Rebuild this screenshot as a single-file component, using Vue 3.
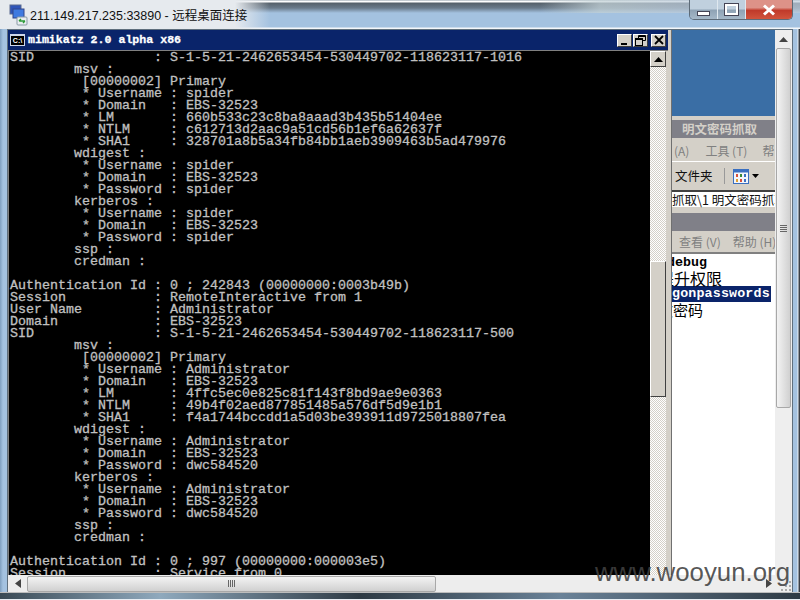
<script setup>
const lines = [
'SID               : S-1-5-21-2462653454-530449702-118623117-1016',
'        msv :',
'         [00000002] Primary',
'         * Username : spider',
'         * Domain   : EBS-32523',
'         * LM       : 660b533c23c8ba8aaad3b435b51404ee',
'         * NTLM     : c612713d2aac9a51cd56b1ef6a62637f',
'         * SHA1     : 328701a8b5a34fb84bb1aeb3909463b5ad479976',
'        wdigest :',
'         * Username : spider',
'         * Domain   : EBS-32523',
'         * Password : spider',
'        kerberos :',
'         * Username : spider',
'         * Domain   : EBS-32523',
'         * Password : spider',
'        ssp :',
'        credman :',
'',
'Authentication Id : 0 ; 242843 (00000000:0003b49b)',
'Session           : RemoteInteractive from 1',
'User Name         : Administrator',
'Domain            : EBS-32523',
'SID               : S-1-5-21-2462653454-530449702-118623117-500',
'        msv :',
'         [00000002] Primary',
'         * Username : Administrator',
'         * Domain   : EBS-32523',
'         * LM       : 4ffc5ec0e825c81f143f8bd9ae9e0363',
'         * NTLM     : 49b4f02aed877851485a576df5d9e1b1',
'         * SHA1     : f4a1744bccdd1a5d03be393911d9725018807fea',
'        wdigest :',
'         * Username : Administrator',
'         * Domain   : EBS-32523',
'         * Password : dwc584520',
'        kerberos :',
'         * Username : Administrator',
'         * Domain   : EBS-32523',
'         * Password : dwc584520',
'        ssp :',
'        credman :',
'',
'Authentication Id : 0 ; 997 (00000000:000003e5)',
'Session           : Service from 0',
]
</script>

<template>
  <div class="screen">
    <header class="titlebar">
      <svg class="rdp" width="22" height="22" viewBox="0 0 22 22">
        <rect x="2" y="1" width="11" height="9" fill="#2f55b8" stroke="#5a6a90"/>
        <rect x="5" y="5" width="11" height="9" fill="#3f7ae0" stroke="#33468a"/>
        <rect x="9" y="13" width="10" height="8" rx="1" fill="#e8eef0" stroke="#8a99a5"/>
        <path d="M11 17h6M11 17l2-2M17 17l-2 2" stroke="#2d9a36" stroke-width="1.4" fill="none"/>
      </svg>
      <span class="title">211.149.217.235:33890 - 远程桌面连接</span>
      <div class="caption">
        <span class="cap"><i class="min"></i></span>
        <span class="cap"><i class="max"></i></span>
        <span class="cap close">
          <svg width="14" height="12" viewBox="0 0 14 12"><path d="M2 1.500l10 9M12 1.500l-10 9" stroke="#fff" stroke-width="3"/></svg>
        </span>
      </div>
    </header>

    <div class="frame">
      <div class="remote">
        <section class="console">
          <div class="conbar">
            <span class="conicon">C:\</span>
            <span class="contitle">mimikatz 2.0 alpha x86</span>
            <span class="conbtns">
              <b class="cb"><svg width="10" height="10" viewBox="0 0 10 10"><path d="M1 8h6v2H1z"/></svg></b>
              <b class="cb"><svg width="11" height="11" viewBox="0 0 11 11" fill="none" stroke="#000"><path d="M3.500 3V.5h7v5H8"/><path d="M3.500 1.500h7"/><rect x=".5" y="3.500" width="7" height="7"/><path d="M.5 4.500h7"/></svg></b>
              <b class="cb gap"><svg width="10" height="10" viewBox="0 0 10 10"><path d="M1 1l8 8M9 1l-8 8" stroke="#000" stroke-width="1.800"/></svg></b>
            </span>
          </div>
          <div class="conbody">
            <pre class="output"><template v-for="(l, i) in lines" :key="i">{{ l }}
</template></pre>
            <div class="conscroll">
              <b class="sbtn"><svg width="9" height="5" viewBox="0 0 9 5"><path d="M4.500 0L9 5H0z"/></svg></b>
              <div class="track"><div class="thumb"></div></div>
            </div>
          </div>
        </section>

        <aside class="side">
          <div class="sidecol">
            <div class="blue"></div>
            <div class="captionbar">明文密码抓取</div>
            <div class="menu"><span class="m1">(A)</span><span class="m2">工具 (T)</span><span class="m3">帮</span></div>
            <div class="tools">
              <span>文件夹</span>
              <i class="sep"></i>
              <svg width="16" height="15" viewBox="0 0 16 15">
                <rect x=".5" y=".5" width="15" height="14" fill="#f4f6fb" stroke="#3a6fc0"/>
                <rect x="1" y="1" width="14" height="2.500" fill="#3a6fc0"/>
                <rect x="3" y="5" width="2" height="3" fill="#d8503a"/><rect x="7" y="5" width="2" height="3" fill="#3a8a3a"/><rect x="11" y="5" width="2" height="3" fill="#3a6fc0"/>
                <rect x="3" y="10" width="2" height="3" fill="#e0a030"/><rect x="7" y="10" width="2" height="3" fill="#d8503a"/><rect x="11" y="10" width="2" height="3" fill="#3a6fc0"/>
              </svg>
              <svg class="drop" width="7" height="4" viewBox="0 0 7 4"><path d="M0 0h7L3.500 4z"/></svg>
            </div>
            <div class="addr"><span>抓取\1 明文密码抓取</span></div>
            <div class="captionbar plain"></div>
            <div class="menu sub"><span>查看 (V)</span><span>帮助 (H)</span></div>
            <div class="doc">
              <div class="dl bold"><span class="d1">debug</span></div>
              <div class="dl cjk"><span class="d2">提升权限</span></div>
              <div class="dl sel"><span>gonpasswords</span></div>
              <div class="dl cjk small"><span class="d2">文密码</span></div>
            </div>
          </div>
          <div class="aeroscroll">
            <svg width="9" height="5" viewBox="0 0 9 5"><path d="M4.500 0L9 5H0z" fill="#444"/></svg>
            <div class="aerothumb"><i></i><i></i><i></i><i></i></div>
          </div>
        </aside>
      </div>

      <div class="hscroll">
        <svg width="6" height="9" viewBox="0 0 6 9"><path d="M0 4.500L6 0v9z" fill="#444"/></svg>
        <div class="hthumb"><i></i><i></i><i></i><i></i></div>
        <svg class="rarrow" width="6" height="9" viewBox="0 0 6 9"><path d="M6 4.500L0 0v9z" fill="#444"/></svg>
        <svg class="grip" width="17" height="16" viewBox="0 0 17 16"><path d="M14 13h2v2h-2zM10 13h2v2h-2zM6 13h2v2H6zM14 9h2v2h-2zM10 9h2v2h-2zM14 5h2v2h-2z" fill="#aaa"/></svg>
      </div>
    </div>
    <div class="bottom"></div>
    <div class="watermark">www.wooyun.org</div>
  </div>
</template>

<style scoped>
.screen {
  position: relative;
  width: 800px;
  height: 600px;
  overflow: hidden;
  display: flex;
  flex-direction: column;
  background: linear-gradient(90deg, #7f9fbf 0, #a4c2e0 3px, #a4c2e0 797px, #eef3f8 798px, #3a4048 799px);
  font-family: "Liberation Sans", "Noto Sans CJK SC", sans-serif;
}
.titlebar {
  height: 29px;
  flex: none;
  display: flex;
  align-items: center;
  padding-left: 8px;
  box-sizing: border-box;
  background:
    linear-gradient(90deg, #e6eaee 0, #e6eaee 235px, rgba(230, 234, 238, 0) 270px),
    linear-gradient(90deg, rgba(170, 190, 205, 0) 540px, rgba(195, 210, 215, .75) 600px, rgba(190, 205, 220, .7) 690px) 0 0 / 100% 13px no-repeat,
    linear-gradient(#8b98a4 0, #fff 1px, #fff 2px, #55606a 3px, #6a7a8a 8px, #a4c2e0 13px, #a4c2e0 27px, #f4f7fa 28px);
}
.rdp { flex: none; }
.title { font-size: 12.500px; color: #111; white-space: nowrap; }
.caption {
  margin-left: auto;
  margin-right: 7px;
  align-self: flex-start;
  display: flex;
  height: 19px;
  border: 1px solid #5d6b78;
  border-top: none;
  border-radius: 0 0 5px 5px;
  overflow: hidden;
}
.cap {
  width: 27px;
  display: flex;
  align-items: center;
  justify-content: center;
  background: linear-gradient(#c0d0de 0 45%, #8fa3b5 55%, #a5b8c8 100%);
  border-right: 1px solid #dfe8ef;
}
.cap.close {
  width: 46px;
  border-right: none;
  background: linear-gradient(#dd9288 0 40%, #c03a2a 55%, #d1543c 100%);
}
.min { width: 11px; height: 3px; margin-top: 7px; background: #fff; border: 1px solid #445; }
.max { width: 9px; height: 7px; border: 2px solid #fff; outline: 1px solid #445; }
.frame {
  flex: 1;
  display: flex;
  flex-direction: column;
  min-height: 0;
  margin: 0 7px;
  background: #f0f0f0;
  border: 1px solid #5f6f7d;
  border-bottom: none;
  box-sizing: border-box;
}
.remote { flex: 1; display: flex; min-height: 0; background: #d4d0c8; }
.console {
  width: 664px;
  flex: none;
  display: flex;
  flex-direction: column;
  box-sizing: border-box;
  border-right: 1px solid #707070;
  padding-right: 3px;
}
.conbar {
  height: 20px;
  flex: none;
  background: #0a246a;
  display: flex;
  align-items: center;
  padding-left: 2px;
}
.conicon {
  width: 15px;
  height: 12px;
  background: #000;
  border: 1px solid #cdd6ea;
  border-top-width: 2px;
  box-sizing: border-box;
  color: #fff;
  font: 700 7px/9px "Liberation Sans", sans-serif;
  text-align: center;
  overflow: hidden;
}
.contitle {
  margin-left: 3px;
  color: #fff;
  font: 700 11.600px/20px "Liberation Mono", monospace;
  -webkit-text-stroke: .3px #fff;
  white-space: nowrap;
}
.conbtns { margin-left: auto; display: flex; gap: 1px; margin-right: 2px; }
.cb {
  width: 15px;
  height: 13px;
  display: flex;
  align-items: center;
  justify-content: center;
  background: #d4d0c8;
  border: 1px solid;
  border-color: #fff #404040 #404040 #fff;
  box-sizing: border-box;
}
.cb.gap { margin-left: 2px; }
.conbody {
  flex: 1;
  display: flex;
  min-height: 0;
  border-top: 1px solid #808080;
  border-left: 1px solid #808080;
  padding-right: 2px;
  background: #d4d0c8;
}
.output {
  flex: 1;
  margin: 0;
  padding: 1px 0 0 1px;
  background: #000;
  color: #c0c0c0;
  font: 13.330px/12px "Liberation Mono", monospace;
  -webkit-text-stroke: .3px #c0c0c0;
  overflow: hidden;
}
.conscroll { width: 16px; flex: none; display: flex; flex-direction: column; }
.sbtn {
  height: 16px;
  flex: none;
  display: flex;
  align-items: center;
  justify-content: center;
  background: #d4d0c8;
  border: 1px solid;
  border-color: #fff #404040 #404040 #fff;
  box-sizing: border-box;
}
.track {
  flex: 1;
  padding-top: 194px;
  background: repeating-conic-gradient(#d4d0c8 0 25%, #fff 0 50%) 0 0 / 2px 2px;
}
.thumb {
  height: 136px;
  background: #d4d0c8;
  border: 1px solid;
  border-color: #fff #404040 #404040 #fff;
  box-sizing: border-box;
}
.side { flex: 1; display: flex; min-width: 0; }
.sidecol {
  flex: 1;
  min-width: 0;
  background: #fff;
  display: flex;
  flex-direction: column;
  overflow: hidden;
}
.blue { height: 86px; flex: none; background: #3a6ea5; border-bottom: 4px solid #d4d0c8; }
.captionbar {
  height: 18px;
  flex: none;
  background: #808088;
  color: #d4d0c8;
  font: 700 12.500px/18px "Noto Sans CJK SC", sans-serif;
  padding-left: 10px;
  white-space: nowrap;
  border-bottom: 2px solid #d4d0c8;
}
.captionbar.plain { border-bottom-width: 1px; }
.menu {
  height: 21px;
  flex: none;
  background: #d4d0c8;
  color: #808080;
  font: 12px/21px "Noto Sans CJK SC", sans-serif;
  display: flex;
  white-space: nowrap;
  border-bottom: 1px solid #fff;
}
.m1 { margin-left: 2px; }
.m2 { margin-left: 16px; }
.m3 { margin-left: 15px; }
.menu.sub {
  height: 20px;
  line-height: 20px;
  gap: 12px;
  padding-left: 7px;
  border-bottom: 2px solid #808080;
}
.tools {
  height: 28px;
  flex: none;
  background: #d4d0c8;
  color: #111;
  font: 12.500px/28px "Noto Sans CJK SC", sans-serif;
  display: flex;
  align-items: center;
  padding-left: 3px;
  white-space: nowrap;
}
.sep { width: 1px; height: 16px; background: #999; margin: 0 8px 0 11px; }
.drop { margin-left: 3px; }
.addr {
  height: 15px;
  flex: none;
  background: #fff;
  border-top: 2px solid #404040;
  border-bottom: 6px solid #d4d0c8;
  font: 12.500px/15px "Noto Sans CJK SC", sans-serif;
  white-space: nowrap;
  color: #111;
}
.doc { flex: 1; background: #fff; }
.dl { height: 16px; font: 13.330px/16px "Liberation Mono", monospace; white-space: nowrap; color: #000; }
.dl.bold { font-weight: 700; line-height: 18px; }
.dl.cjk { font: 16px/16px "Noto Sans CJK SC", sans-serif; }
.dl.small { font-size: 15px; }
.d1 { display: inline-block; margin-left: -5px; }
.d2 { display: inline-block; margin-left: -14px; }
.dl.sel {
  background: #0a246a;
  color: #fff;
  margin-right: 4px;
  font-weight: 700;
  letter-spacing: .15px;
}
.aeroscroll {
  width: 17px;
  flex: none;
  background: #eeeeee;
  display: flex;
  flex-direction: column;
  align-items: center;
  padding-top: 7px;
  box-sizing: border-box;
}
.aerothumb {
  margin-top: 6px;
  width: 15px;
  height: 360px;
  background: linear-gradient(90deg, #f3f3f3, #d0d0d0);
  border: 1px solid #a8a8a8;
  border-radius: 2px;
  box-sizing: border-box;
  display: flex;
  flex-direction: column;
  justify-content: center;
  align-items: center;
  gap: 1px;
}
.aerothumb i { width: 7px; height: 1px; background: #666; }
.hscroll {
  height: 17px;
  flex: none;
  background: #ededed;
  display: flex;
  align-items: center;
  padding-left: 7px;
  box-sizing: border-box;
}
.hthumb {
  width: 407px;
  flex: none;
  margin-left: 6px;
  height: 14px;
  background: linear-gradient(#f3f3f3, #d0d0d0);
  border: 1px solid #a8a8a8;
  border-radius: 2px;
  display: flex;
  justify-content: center;
  align-items: center;
  gap: 1px;
}
.hthumb i { width: 1px; height: 7px; background: #666; }
.rarrow { margin-left: auto; margin-right: 3px; }
.grip { flex: none; }
.bottom {
  height: 8px;
  flex: none;
  background: linear-gradient(90deg, #3a4a55, #8fa9bd 20%, #2e3a44 45%, #6a8298 70%, #2e3a44);
  border-top: 1px solid #bdbdbd;
  border-bottom: 1px solid #e8eef4;
  box-sizing: border-box;
}
.watermark {
  position: absolute;
  right: 10px;
  bottom: 14px;
  font: 25.800px/28px "Liberation Sans", sans-serif;
  color: rgba(65, 65, 65, .88);
}
</style>

<style>
body { margin: 0; }
</style>
